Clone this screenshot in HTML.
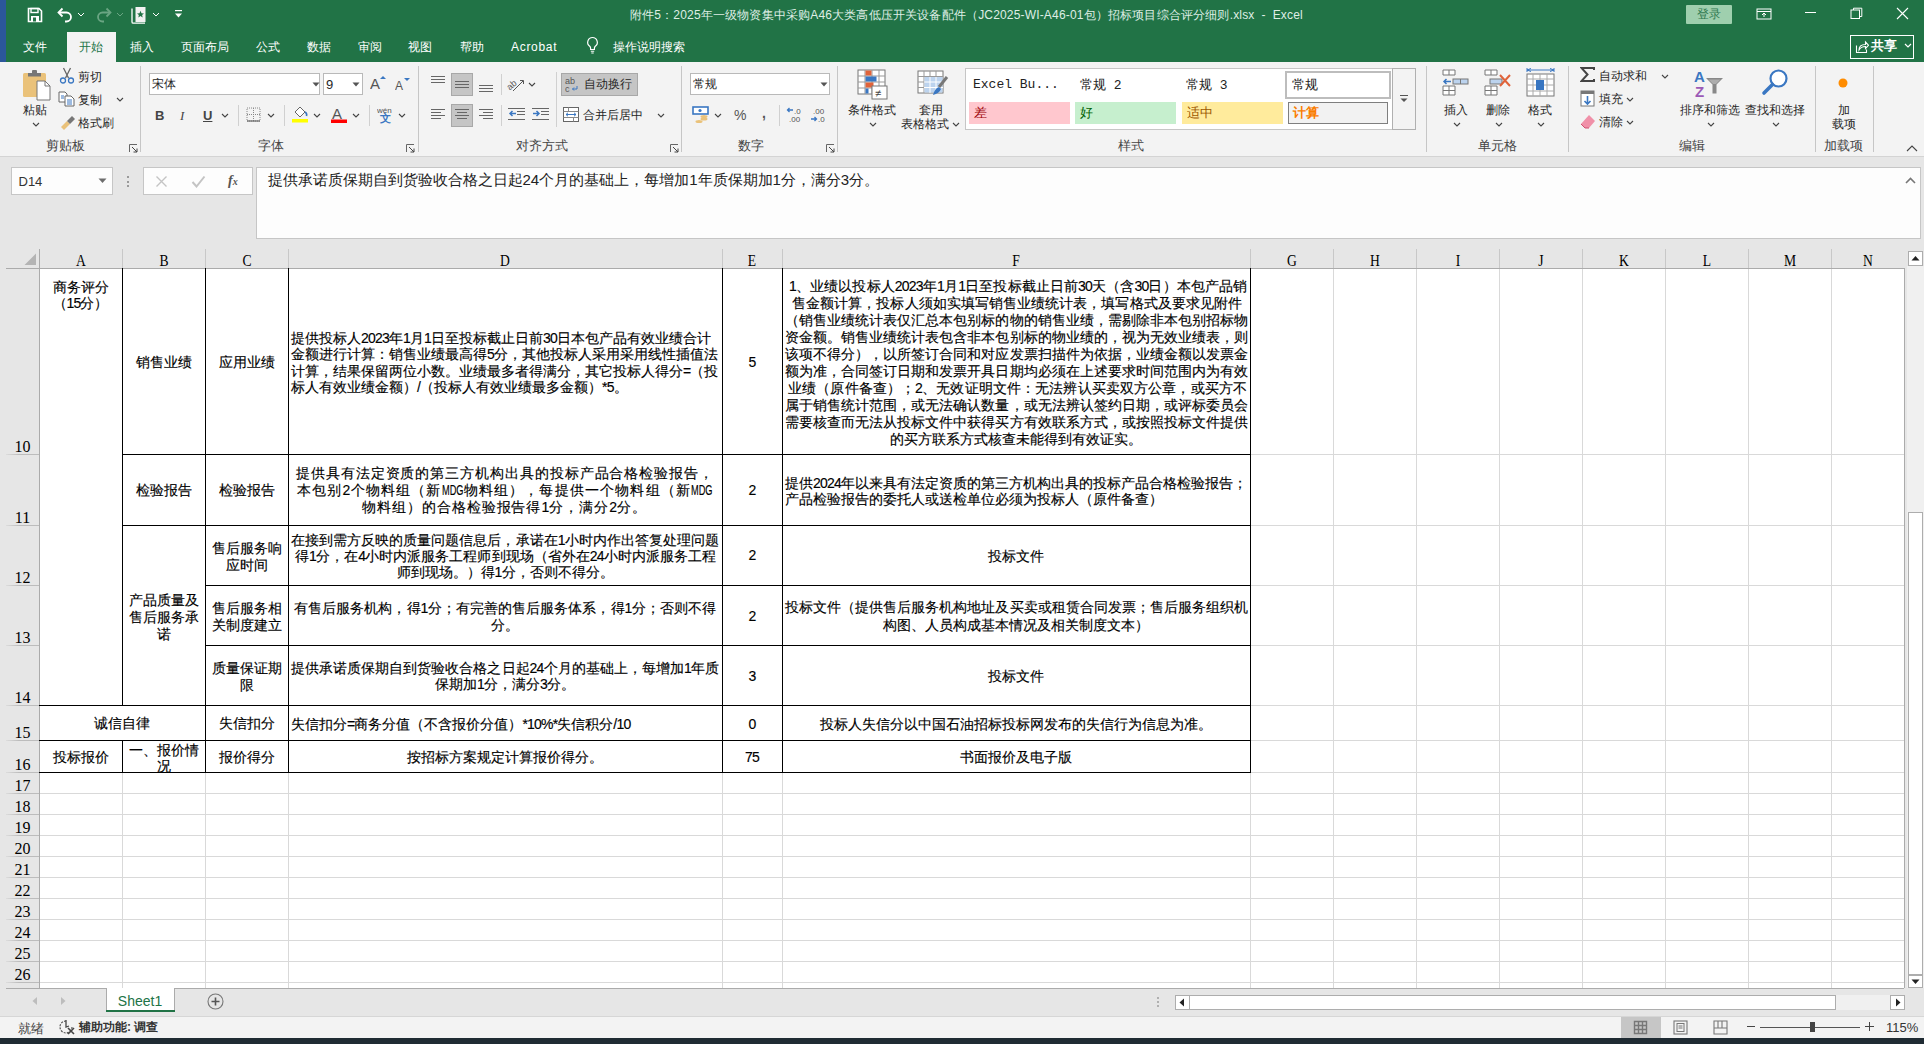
<!DOCTYPE html><html><head><meta charset="utf-8"><style>
html,body{margin:0;padding:0}
body{width:1924px;height:1044px;overflow:hidden;position:relative;background:#fff;font-family:"Liberation Sans",sans-serif}
body div{position:absolute;box-sizing:border-box}
.c{font-size:14px;color:#000;white-space:nowrap;font-family:"Liberation Sans",sans-serif;-webkit-text-stroke:0.15px #000}
.a{letter-spacing:-0.8px}
.L{display:inline-block;height:17px;vertical-align:top}
.L>span{display:inline-block;transform:scaleX(.66);transform-origin:0 50%}
</style></head><body>
<div style="left:0px;top:0px;width:1924px;height:62px;background:#217346"></div>
<div style="left:0px;top:0px;width:6px;height:62px;background:#2b579a"></div>
<div style="left:0px;top:62px;width:1924px;height:94px;background:#f3f3f3"></div>
<div style="left:0px;top:156px;width:1924px;height:1px;background:#d4d4d4"></div>
<div style="left:0px;top:157px;width:1924px;height:831px;background:#e6e6e6"></div>
<svg style="position:absolute;left:27px;top:7px;" width="16" height="16" viewBox="0 0 16 16"><path d="M1.5 1.5h10.5l2.5 2.5v10.5h-13z" fill="none" stroke="#fff" stroke-width="1.6"/><rect x="4" y="1.5" width="7" height="4" fill="none" stroke="#fff" stroke-width="1.4"/><rect x="4" y="9" width="8" height="5.5" fill="#fff"/><rect x="6" y="10.5" width="3" height="4" fill="#217346"/></svg>
<svg style="position:absolute;left:56px;top:7px;" width="18" height="16" viewBox="0 0 18 16"><path d="M3 5.5h7.5a4.5 4.5 0 0 1 0 9h-1.5" fill="none" stroke="#fff" stroke-width="1.8"/><path d="M6.5 1.5L2.5 5.5l4 4" fill="none" stroke="#fff" stroke-width="1.8"/></svg>
<svg style="position:absolute;left:77px;top:12px;" width="8" height="5" viewBox="0 0 8 5"><path d="M1 1l3 3 3-3" fill="none" stroke="#fff" stroke-width="1"/></svg>
<svg style="position:absolute;left:95px;top:7px;" width="18" height="16" viewBox="0 0 18 16"><path d="M15 5.5h-7.5a4.5 4.5 0 0 0 0 9h1.5" fill="none" stroke="#6aa583" stroke-width="1.8"/><path d="M11.5 1.5l4 4-4 4" fill="none" stroke="#6aa583" stroke-width="1.8"/></svg>
<svg style="position:absolute;left:116px;top:12px;" width="8" height="5" viewBox="0 0 8 5"><path d="M1 1l3 3 3-3" fill="none" stroke="#6aa583" stroke-width="1"/></svg>
<svg style="position:absolute;left:130px;top:6px;" width="17" height="18" viewBox="0 0 17 18"><path d="M2 2.5v13.5c0 .8.5 1.2 1.2 1.2H15" fill="none" stroke="#fff" stroke-width="1.3"/><rect x="5.5" y="1" width="10" height="15" fill="#f2f2f2"/><path d="M10.5 4.8l1 2.4 2.5.2-1.9 1.6.6 2.5-2.2-1.4-2.2 1.4.6-2.5-1.9-1.6 2.5-.2z" fill="#217346"/></svg>
<svg style="position:absolute;left:152px;top:12px;" width="8" height="5" viewBox="0 0 8 5"><path d="M1 1l3 3 3-3" fill="none" stroke="#fff" stroke-width="1"/></svg>
<svg style="position:absolute;left:174px;top:9px;" width="9" height="10" viewBox="0 0 9 10"><rect x="1" y="1" width="7" height="1.2" fill="#fff"/><path d="M1 4.5h7l-3.5 4z" fill="#fff"/></svg>
<div style="left:630px;top:6.7px;line-height:17px;font-size:12px;color:#dfeee5;white-space:nowrap;font-family:'Liberation Sans',sans-serif;letter-spacing:0.17px;">附件5：2025年一级物资集中采购A46大类高低压开关设备配件（JC2025-WI-A46-01包）招标项目综合评分细则.xlsx&nbsp; -&nbsp; Excel</div>
<div style="left:1686px;top:5px;width:46px;height:19px;background:#9fcfae;border-radius:1px"></div>
<div style="left:1509.0px;top:6.0px;width:400px;text-align:center;line-height:17px;font-size:12px;color:#2f7a50;white-space:nowrap;">登录</div>
<svg style="position:absolute;left:1756px;top:8px;" width="16" height="12" viewBox="0 0 16 12"><rect x="1" y="1" width="14" height="10" fill="none" stroke="#fff" stroke-width="1"/><path d="M1 3.5h14" stroke="#fff" stroke-width="1"/><path d="M8 9V5M6 7l2-2 2 2" fill="none" stroke="#fff" stroke-width="1"/></svg>
<div style="left:1805px;top:12px;width:11px;height:1px;background:#fff"></div>
<svg style="position:absolute;left:1850px;top:7px;" width="13" height="13" viewBox="0 0 13 13"><rect x="1" y="3" width="8.5" height="8.5" fill="none" stroke="#fff" stroke-width="1"/><path d="M3.5 3V1.2h8.3v8.3H9.5" fill="none" stroke="#fff" stroke-width="1"/></svg>
<svg style="position:absolute;left:1896px;top:7px;" width="13" height="13" viewBox="0 0 13 13"><path d="M1 1l11 11M12 1L1 12" stroke="#fff" stroke-width="1.1"/></svg>
<div style="left:23px;top:38.5px;line-height:17px;font-size:12px;color:#fff;white-space:nowrap;font-family:'Liberation Sans',sans-serif;">文件</div>
<div style="left:129.5px;top:38.5px;line-height:17px;font-size:12px;color:#fff;white-space:nowrap;font-family:'Liberation Sans',sans-serif;">插入</div>
<div style="left:180.5px;top:38.5px;line-height:17px;font-size:12px;color:#fff;white-space:nowrap;font-family:'Liberation Sans',sans-serif;">页面布局</div>
<div style="left:256px;top:38.5px;line-height:17px;font-size:12px;color:#fff;white-space:nowrap;font-family:'Liberation Sans',sans-serif;">公式</div>
<div style="left:306.5px;top:38.5px;line-height:17px;font-size:12px;color:#fff;white-space:nowrap;font-family:'Liberation Sans',sans-serif;">数据</div>
<div style="left:358px;top:38.5px;line-height:17px;font-size:12px;color:#fff;white-space:nowrap;font-family:'Liberation Sans',sans-serif;">审阅</div>
<div style="left:408px;top:38.5px;line-height:17px;font-size:12px;color:#fff;white-space:nowrap;font-family:'Liberation Sans',sans-serif;">视图</div>
<div style="left:459.5px;top:38.5px;line-height:17px;font-size:12px;color:#fff;white-space:nowrap;font-family:'Liberation Sans',sans-serif;">帮助</div>
<div style="left:511px;top:38.5px;line-height:17px;font-size:12px;color:#fff;white-space:nowrap;font-family:'Liberation Sans',sans-serif;letter-spacing:0.7px;">Acrobat</div>
<div style="left:613px;top:38.5px;line-height:17px;font-size:12px;color:#fff;white-space:nowrap;font-family:'Liberation Sans',sans-serif;">操作说明搜索</div>
<div style="left:67px;top:32px;width:49px;height:30px;background:#f3f3f3"></div>
<div style="left:78.5px;top:38.5px;line-height:17px;font-size:12px;color:#217346;white-space:nowrap;">开始</div>
<svg style="position:absolute;left:586px;top:36px;" width="13" height="18" viewBox="0 0 13 18"><path d="M6.5 1.5a4.8 4.8 0 0 0-2.8 8.7c.6.5.9 1.2.9 2v1.3h3.8v-1.3c0-.8.3-1.5.9-2a4.8 4.8 0 0 0-2.8-8.7z" fill="none" stroke="#fff" stroke-width="1.2"/><path d="M4.8 15.2h3.4M5.3 17h2.4" stroke="#fff" stroke-width="1.1"/></svg>
<div style="left:1850px;top:35px;width:64px;height:24px;border:1px solid #fff"></div>
<svg style="position:absolute;left:1855px;top:39px;" width="14" height="15" viewBox="0 0 14 15"><path d="M1.5 6.5v7h10v-3" fill="none" stroke="#fff" stroke-width="1.1"/><path d="M4 11c0-4 3-5.5 6.5-5.5V3l3 3.3-3 3.2V7.5c-2.5 0-5 .8-6.5 3.5z" fill="none" stroke="#fff" stroke-width="1.1"/></svg>
<div style="left:1871px;top:37.0px;line-height:17px;font-size:13px;color:#fff;white-space:nowrap;font-weight:bold;">共享</div>
<svg style="position:absolute;left:1904px;top:43px;" width="8" height="5" viewBox="0 0 8 5"><path d="M1 1l3 3 3-3" fill="none" stroke="#fff" stroke-width="1.2"/></svg>
<div style="left:140px;top:66px;width:1px;height:86px;background:#c6c6c6"></div>
<div style="left:418px;top:66px;width:1px;height:86px;background:#c6c6c6"></div>
<div style="left:681px;top:66px;width:1px;height:86px;background:#c6c6c6"></div>
<div style="left:837px;top:66px;width:1px;height:86px;background:#c6c6c6"></div>
<div style="left:1426px;top:66px;width:1px;height:86px;background:#c6c6c6"></div>
<div style="left:1568px;top:66px;width:1px;height:86px;background:#c6c6c6"></div>
<div style="left:1815px;top:66px;width:1px;height:86px;background:#c6c6c6"></div>
<div style="left:1873px;top:66px;width:1px;height:86px;background:#c6c6c6"></div>
<div style="left:-135.0px;top:138.0px;width:400px;text-align:center;line-height:17px;font-size:12.5px;color:#444;white-space:nowrap;">剪贴板</div>
<div style="left:71.0px;top:138.0px;width:400px;text-align:center;line-height:17px;font-size:12.5px;color:#444;white-space:nowrap;">字体</div>
<div style="left:342.0px;top:138.0px;width:400px;text-align:center;line-height:17px;font-size:12.5px;color:#444;white-space:nowrap;">对齐方式</div>
<div style="left:551.0px;top:138.0px;width:400px;text-align:center;line-height:17px;font-size:12.5px;color:#444;white-space:nowrap;">数字</div>
<div style="left:931.0px;top:138.0px;width:400px;text-align:center;line-height:17px;font-size:12.5px;color:#444;white-space:nowrap;">样式</div>
<div style="left:1297.0px;top:138.0px;width:400px;text-align:center;line-height:17px;font-size:12.5px;color:#444;white-space:nowrap;">单元格</div>
<div style="left:1492.0px;top:138.0px;width:400px;text-align:center;line-height:17px;font-size:12.5px;color:#444;white-space:nowrap;">编辑</div>
<div style="left:1643.5px;top:138.0px;width:400px;text-align:center;line-height:17px;font-size:12.5px;color:#444;white-space:nowrap;">加载项</div>
<svg style="position:absolute;left:129px;top:144px;" width="9" height="9" viewBox="0 0 9 9"><path d="M0.5 8V0.5H8" fill="none" stroke="#666" stroke-width="1"/><path d="M3 3l5 5M8 4.5V8H4.5" fill="none" stroke="#444" stroke-width="1"/></svg>
<svg style="position:absolute;left:406px;top:144px;" width="9" height="9" viewBox="0 0 9 9"><path d="M0.5 8V0.5H8" fill="none" stroke="#666" stroke-width="1"/><path d="M3 3l5 5M8 4.5V8H4.5" fill="none" stroke="#444" stroke-width="1"/></svg>
<svg style="position:absolute;left:670px;top:144px;" width="9" height="9" viewBox="0 0 9 9"><path d="M0.5 8V0.5H8" fill="none" stroke="#666" stroke-width="1"/><path d="M3 3l5 5M8 4.5V8H4.5" fill="none" stroke="#444" stroke-width="1"/></svg>
<svg style="position:absolute;left:826px;top:144px;" width="9" height="9" viewBox="0 0 9 9"><path d="M0.5 8V0.5H8" fill="none" stroke="#666" stroke-width="1"/><path d="M3 3l5 5M8 4.5V8H4.5" fill="none" stroke="#444" stroke-width="1"/></svg>
<svg style="position:absolute;left:1906px;top:145px;" width="12" height="7" viewBox="0 0 12 7"><path d="M1 6l5-5 5 5" fill="none" stroke="#444" stroke-width="1.1"/></svg>
<svg style="position:absolute;left:22px;top:69px;" width="30" height="32" viewBox="0 0 30 32"><rect x="1" y="4" width="23" height="24" rx="1.5" fill="#eac27a"/><path d="M6 4h13v3.5H6z" fill="#777"/><rect x="10" y="1" width="5" height="4" rx="1" fill="#777"/><path d="M15 12h8l5 5v14H15z" fill="#fff" stroke="#777" stroke-width="1"/><path d="M23 12v5h5" fill="none" stroke="#777" stroke-width="1"/></svg>
<div style="left:-165.0px;top:102.0px;width:400px;text-align:center;line-height:17px;font-size:12px;color:#262626;white-space:nowrap;">粘贴</div>
<svg style="position:absolute;left:32px;top:122px;" width="8" height="5" viewBox="0 0 8 5"><path d="M1 1l3 3 3-3" fill="none" stroke="#444" stroke-width="1.1"/></svg>
<svg style="position:absolute;left:59px;top:67px;" width="16" height="17" viewBox="0 0 16 17"><path d="M4.5 1l5 10M11.5 1l-5 10" stroke="#666" stroke-width="1.3"/><circle cx="4" cy="13.5" r="2.5" fill="none" stroke="#3a77c2" stroke-width="1.3"/><circle cx="12" cy="13.5" r="2.5" fill="none" stroke="#3a77c2" stroke-width="1.3"/></svg>
<div style="left:78px;top:68.5px;line-height:17px;font-size:12px;color:#262626;white-space:nowrap;">剪切</div>
<svg style="position:absolute;left:58px;top:91px;" width="17" height="16" viewBox="0 0 17 16"><path d="M1 1h6l2 2v8H1z" fill="#fff" stroke="#666" stroke-width="1"/><path d="M7 5h6l3 3v7H7z" fill="#fff" stroke="#666" stroke-width="1"/><path d="M9 9h5M9 11h5M9 13h5M3 5h3M3 7h3" stroke="#3a77c2" stroke-width="1"/></svg>
<div style="left:78px;top:91.5px;line-height:17px;font-size:12px;color:#262626;white-space:nowrap;">复制</div>
<svg style="position:absolute;left:116px;top:97px;" width="8" height="5" viewBox="0 0 8 5"><path d="M1 1l3 3 3-3" fill="none" stroke="#444" stroke-width="1.1"/></svg>
<svg style="position:absolute;left:59px;top:114px;" width="17" height="16" viewBox="0 0 17 16"><path d="M2 13l6-6 3 3-6 6z" fill="#eac27a"/><path d="M8 7l5-5 3 3-5 5z" fill="#777"/></svg>
<div style="left:78px;top:114.5px;line-height:17px;font-size:12px;color:#262626;white-space:nowrap;">格式刷</div>
<div style="left:149px;top:73px;width:171px;height:22px;background:#fff;border:1px solid #b9b9b9;box-sizing:border-box"></div>
<div style="left:152px;top:75.5px;line-height:17px;font-size:12px;color:#262626;white-space:nowrap;">宋体</div>
<svg style="position:absolute;left:312px;top:82px;" width="8" height="5" viewBox="0 0 8 5"><path d="M0.5 0.5h7l-3.5 4z" fill="#555"/></svg>
<div style="left:323px;top:73px;width:40px;height:22px;background:#fff;border:1px solid #b9b9b9;box-sizing:border-box"></div>
<div style="left:326px;top:75.5px;line-height:17px;font-size:13px;color:#262626;white-space:nowrap;font-family:'Liberation Sans',sans-serif;">9</div>
<svg style="position:absolute;left:352px;top:82px;" width="8" height="5" viewBox="0 0 8 5"><path d="M0.5 0.5h7l-3.5 4z" fill="#555"/></svg>
<svg style="position:absolute;left:370px;top:75px;" width="16" height="15" viewBox="0 0 16 15"><text x="0" y="14" font-family="Liberation Sans" font-size="15" fill="#555">A</text><path d="M10 4l3-3 3 3z" fill="#3a77c2"/></svg>
<svg style="position:absolute;left:395px;top:77px;" width="15" height="13" viewBox="0 0 15 13"><text x="0" y="12.5" font-family="Liberation Sans" font-size="12" fill="#555">A</text><path d="M9 1h6l-3 3z" fill="#3a77c2"/></svg>
<div style="left:155px;top:106.5px;line-height:17px;font-size:13px;color:#444;white-space:nowrap;font-family:'Liberation Sans',sans-serif;font-weight:bold;">B</div>
<div style="left:180px;top:106.5px;line-height:17px;font-size:13px;color:#444;white-space:nowrap;font-family:'Liberation Serif',serif;font-style:italic;">I</div>
<div style="left:203px;top:106.5px;line-height:17px;font-size:13px;color:#444;white-space:nowrap;font-family:'Liberation Sans',sans-serif;font-weight:bold;text-decoration:underline;">U</div>
<svg style="position:absolute;left:221px;top:113px;" width="8" height="5" viewBox="0 0 8 5"><path d="M1 1l3 3 3-3" fill="none" stroke="#444" stroke-width="1.1"/></svg>
<div style="left:238px;top:105px;width:1px;height:21px;background:#d0d0d0"></div>
<svg style="position:absolute;left:246px;top:107px;" width="15" height="15" viewBox="0 0 15 15"><path d="M1 1h13v13H1zM7.5 1v13M1 7.5h13" fill="none" stroke="#888" stroke-width="1" stroke-dasharray="1 1"/><path d="M1 14h13" stroke="#666" stroke-width="1.2"/></svg>
<svg style="position:absolute;left:267px;top:113px;" width="8" height="5" viewBox="0 0 8 5"><path d="M1 1l3 3 3-3" fill="none" stroke="#444" stroke-width="1.1"/></svg>
<div style="left:284px;top:105px;width:1px;height:21px;background:#d0d0d0"></div>
<svg style="position:absolute;left:291px;top:106px;" width="18" height="17" viewBox="0 0 18 17"><path d="M4 6l5-5 5 5-5 5z" fill="#fff" stroke="#666" stroke-width="1"/><path d="M14 6c1.5 1 2 2.5 1.5 4" fill="none" stroke="#3a77c2" stroke-width="1.6"/><rect x="1" y="13" width="16" height="3.5" fill="#ffff00"/></svg>
<svg style="position:absolute;left:313px;top:113px;" width="8" height="5" viewBox="0 0 8 5"><path d="M1 1l3 3 3-3" fill="none" stroke="#444" stroke-width="1.1"/></svg>
<svg style="position:absolute;left:330px;top:106px;" width="18" height="18" viewBox="0 0 18 18"><text x="2" y="13" font-family="Liberation Sans" font-size="15" fill="#555">A</text><rect x="1" y="13.5" width="16" height="3.5" fill="#ff0000"/></svg>
<svg style="position:absolute;left:352px;top:113px;" width="8" height="5" viewBox="0 0 8 5"><path d="M1 1l3 3 3-3" fill="none" stroke="#444" stroke-width="1.1"/></svg>
<div style="left:369px;top:105px;width:1px;height:21px;background:#d0d0d0"></div>
<svg style="position:absolute;left:377px;top:106px;" width="18" height="18" viewBox="0 0 18 18"><text x="0" y="7" font-family="Liberation Sans" font-size="8" fill="#555">wén</text></svg>
<div style="left:380px;top:110.0px;line-height:17px;font-size:11px;color:#3a77c2;white-space:nowrap;font-weight:bold;">文</div>
<svg style="position:absolute;left:398px;top:113px;" width="8" height="5" viewBox="0 0 8 5"><path d="M1 1l3 3 3-3" fill="none" stroke="#444" stroke-width="1.1"/></svg>
<svg style="position:absolute;left:430px;top:75px;" width="16" height="10" viewBox="0 0 16 10"><rect x="1" y="1" width="14" height="1" fill="#666"/><rect x="1" y="4" width="14" height="1" fill="#666"/><rect x="1" y="7" width="14" height="1" fill="#666"/></svg>
<div style="left:451px;top:73px;width:22px;height:23px;background:#c5c5c5;border:1px solid #a8a8a8;box-sizing:border-box"></div>
<svg style="position:absolute;left:454px;top:80px;" width="16" height="10" viewBox="0 0 16 10"><rect x="1" y="1" width="14" height="1" fill="#666"/><rect x="1" y="4" width="14" height="1" fill="#666"/><rect x="1" y="7" width="14" height="1" fill="#666"/></svg>
<svg style="position:absolute;left:478px;top:84px;" width="16" height="10" viewBox="0 0 16 10"><rect x="1" y="1" width="14" height="1" fill="#666"/><rect x="1" y="4" width="14" height="1" fill="#666"/><rect x="1" y="7" width="14" height="1" fill="#666"/></svg>
<div style="left:501px;top:74px;width:1px;height:21px;background:#d0d0d0"></div>
<svg style="position:absolute;left:507px;top:75px;" width="20" height="18" viewBox="0 0 20 18"><text x="0" y="12" font-family="Liberation Sans" font-size="9" fill="#555" transform="rotate(-40 6 10)">ab</text><path d="M6 16l10-10M13 5.5h3.5V9" fill="none" stroke="#555" stroke-width="1"/></svg>
<svg style="position:absolute;left:528px;top:82px;" width="8" height="5" viewBox="0 0 8 5"><path d="M1 1l3 3 3-3" fill="none" stroke="#444" stroke-width="1.1"/></svg>
<svg style="position:absolute;left:430px;top:108px;" width="16" height="14" viewBox="0 0 16 14"><rect x="1" y="1" width="14" height="1" fill="#666"/><rect x="1" y="4" width="10" height="1" fill="#666"/><rect x="1" y="7" width="14" height="1" fill="#666"/><rect x="1" y="10" width="10" height="1" fill="#666"/></svg>
<div style="left:451px;top:104px;width:22px;height:23px;background:#c5c5c5;border:1px solid #a8a8a8;box-sizing:border-box"></div>
<svg style="position:absolute;left:454px;top:108px;" width="16" height="14" viewBox="0 0 16 14"><rect x="1.0" y="1" width="14" height="1" fill="#666"/><rect x="3.0" y="4" width="10" height="1" fill="#666"/><rect x="1.0" y="7" width="14" height="1" fill="#666"/><rect x="3.0" y="10" width="10" height="1" fill="#666"/></svg>
<svg style="position:absolute;left:478px;top:108px;" width="16" height="14" viewBox="0 0 16 14"><rect x="1" y="1" width="14" height="1" fill="#666"/><rect x="5" y="4" width="10" height="1" fill="#666"/><rect x="1" y="7" width="14" height="1" fill="#666"/><rect x="5" y="10" width="10" height="1" fill="#666"/></svg>
<div style="left:501px;top:105px;width:1px;height:21px;background:#d0d0d0"></div>
<svg style="position:absolute;left:508px;top:107px;" width="18" height="14" viewBox="0 0 18 14"><rect x="0" y="1" width="17" height="1" fill="#666"/><rect x="9" y="4" width="8" height="1" fill="#666"/><rect x="9" y="7" width="8" height="1" fill="#666"/><rect x="0" y="12" width="17" height="1" fill="#666"/><path d="M8 6.5H2M4.5 4L2 6.5 4.5 9" fill="none" stroke="#3a77c2" stroke-width="1.5"/></svg>
<svg style="position:absolute;left:532px;top:107px;" width="18" height="14" viewBox="0 0 18 14"><rect x="0" y="1" width="17" height="1" fill="#666"/><rect x="9" y="4" width="8" height="1" fill="#666"/><rect x="9" y="7" width="8" height="1" fill="#666"/><rect x="0" y="12" width="17" height="1" fill="#666"/><path d="M1 6.5h6M4.5 4L7 6.5 4.5 9" fill="none" stroke="#3a77c2" stroke-width="1.5"/></svg>
<div style="left:556px;top:72px;width:1px;height:55px;background:#d0d0d0"></div>
<div style="left:561px;top:73px;width:77px;height:23px;background:#c5c5c5;border:1px solid #a8a8a8;box-sizing:border-box"></div>
<svg style="position:absolute;left:565px;top:76px;" width="16" height="17" viewBox="0 0 16 17"><text x="0" y="8" font-family="Liberation Sans" font-size="9" fill="#555">ab</text><text x="0" y="16" font-family="Liberation Sans" font-size="9" fill="#555">c</text><path d="M12 10v3H7.5M9 11.5L7.5 13 9 14.5" fill="none" stroke="#3a77c2" stroke-width="1"/></svg>
<div style="left:584px;top:76.0px;line-height:17px;font-size:12px;color:#262626;white-space:nowrap;">自动换行</div>
<svg style="position:absolute;left:563px;top:107px;" width="17" height="16" viewBox="0 0 17 16"><rect x="0.5" y="0.5" width="15" height="14" fill="#fff" stroke="#666" stroke-width="1"/><path d="M0.5 4.5h15M0.5 10.5h15M5.5 0.5v4M10.5 10.5v4" stroke="#888" stroke-width="1"/><path d="M3 7.5h10M5 5.8L3 7.5 5 9.2M11 5.8l2 1.7-2 1.7" fill="none" stroke="#3a77c2" stroke-width="1"/></svg>
<div style="left:583px;top:106.5px;line-height:17px;font-size:12px;color:#262626;white-space:nowrap;">合并后居中</div>
<svg style="position:absolute;left:657px;top:113px;" width="8" height="5" viewBox="0 0 8 5"><path d="M1 1l3 3 3-3" fill="none" stroke="#444" stroke-width="1.1"/></svg>
<div style="left:690px;top:73px;width:140px;height:22px;background:#fff;border:1px solid #b9b9b9;box-sizing:border-box"></div>
<div style="left:693px;top:75.5px;line-height:17px;font-size:12px;color:#262626;white-space:nowrap;">常规</div>
<svg style="position:absolute;left:820px;top:82px;" width="8" height="5" viewBox="0 0 8 5"><path d="M0.5 0.5h7l-3.5 4z" fill="#555"/></svg>
<svg style="position:absolute;left:692px;top:106px;" width="18" height="18" viewBox="0 0 18 18"><rect x="1" y="1" width="15" height="7" fill="#fff" stroke="#3a77c2" stroke-width="1.6"/><circle cx="8" cy="4.5" r="1.6" fill="#3a77c2"/><ellipse cx="12" cy="10.5" rx="3.5" ry="1.5" fill="#eac27a"/><ellipse cx="12" cy="13" rx="3.5" ry="1.5" fill="#eac27a"/><ellipse cx="7" cy="15.5" rx="3.5" ry="1.5" fill="#eac27a"/></svg>
<svg style="position:absolute;left:714px;top:113px;" width="8" height="5" viewBox="0 0 8 5"><path d="M1 1l3 3 3-3" fill="none" stroke="#444" stroke-width="1.1"/></svg>
<div style="left:734px;top:107.0px;line-height:17px;font-size:14px;color:#555;white-space:nowrap;font-family:'Liberation Sans',sans-serif;">%</div>
<div style="left:762px;top:104.5px;line-height:17px;font-size:14px;color:#555;white-space:nowrap;font-family:'Liberation Sans',sans-serif;font-weight:bold;">,</div>
<div style="left:779px;top:105px;width:1px;height:21px;background:#d0d0d0"></div>
<svg style="position:absolute;left:786px;top:106px;" width="16" height="17" viewBox="0 0 16 17"><path d="M7 4H1.5M3.5 2L1.5 4l2 2" fill="none" stroke="#3a77c2" stroke-width="1.3"/><text x="8" y="8" font-family="Liberation Sans" font-size="8" fill="#555">.0</text><text x="3" y="16" font-family="Liberation Sans" font-size="8" fill="#555">.00</text></svg>
<svg style="position:absolute;left:810px;top:106px;" width="16" height="17" viewBox="0 0 16 17"><text x="3" y="8" font-family="Liberation Sans" font-size="8" fill="#555">.00</text><path d="M1 13h5.5M4.5 11l2 2-2 2" fill="none" stroke="#3a77c2" stroke-width="1.3"/><text x="8" y="16" font-family="Liberation Sans" font-size="8" fill="#555">.0</text></svg>
<svg style="position:absolute;left:857px;top:69px;" width="32" height="32" viewBox="0 0 32 32"><rect x="1" y="1" width="27" height="24" fill="#fff" stroke="#777" stroke-width="1"/><path d="M1 7h27M1 13h27M1 19h27M8 1v24M15 1v24M22 1v24" stroke="#999" stroke-width="1"/><rect x="8.5" y="1.5" width="6" height="5" fill="#e0633a"/><rect x="8.5" y="7.5" width="11" height="5" fill="#3a77c2"/><rect x="8.5" y="13.5" width="8" height="5" fill="#e0633a"/><rect x="8.5" y="19.5" width="3" height="5" fill="#3a77c2"/><rect x="15" y="17" width="15" height="13" fill="#fff" stroke="#777" stroke-width="1"/><text x="18" y="28" font-family="Liberation Sans" font-size="11" fill="#444">≠</text></svg>
<div style="left:672.0px;top:101.5px;width:400px;text-align:center;line-height:17px;font-size:12px;color:#262626;white-space:nowrap;">条件格式</div>
<svg style="position:absolute;left:869px;top:122px;" width="8" height="5" viewBox="0 0 8 5"><path d="M1 1l3 3 3-3" fill="none" stroke="#444" stroke-width="1.1"/></svg>
<svg style="position:absolute;left:917px;top:70px;" width="32" height="32" viewBox="0 0 32 32"><rect x="1" y="1" width="25" height="22" fill="#fff" stroke="#777" stroke-width="1"/><path d="M1 6.5h25M1 12h25M1 17.5h25M7 1v22M13 1v22M19 1v22" stroke="#999" stroke-width="1"/><rect x="7.5" y="7" width="18" height="15.5" fill="#bcd3ee"/><path d="M7 12h19M7 17.5h19M13 7v16M19 7v16" stroke="#fff" stroke-width="1"/><path d="M30 7l-8 10" stroke="#777" stroke-width="3"/><path d="M22 17c-3 1-5 4-6 8 4-1 7-3 8-6z" fill="#3a77c2"/></svg>
<div style="left:731.0px;top:101.5px;width:400px;text-align:center;line-height:17px;font-size:12px;color:#262626;white-space:nowrap;">套用</div>
<div style="left:725.0px;top:116.0px;width:400px;text-align:center;line-height:17px;font-size:12px;color:#262626;white-space:nowrap;">表格格式</div>
<svg style="position:absolute;left:952px;top:122px;" width="8" height="5" viewBox="0 0 8 5"><path d="M1 1l3 3 3-3" fill="none" stroke="#444" stroke-width="1.1"/></svg>
<div style="left:965px;top:68px;width:428px;height:62px;background:#fff;border:1px solid #c6c6c6;box-sizing:border-box"></div>
<div style="left:973px;top:76.0px;line-height:17px;font-size:13px;color:#222;white-space:nowrap;font-family:'Liberation Mono',monospace;">Excel Bu...</div>
<div style="left:1080px;top:75.5px;line-height:17px;font-size:13px;color:#222;white-space:nowrap;">常规<span style="font-family:Liberation Mono">&nbsp;2</span></div>
<div style="left:1186px;top:75.5px;line-height:17px;font-size:13px;color:#222;white-space:nowrap;">常规<span style="font-family:Liberation Mono">&nbsp;3</span></div>
<div style="left:1285px;top:71px;width:106px;height:28px;background:#fff;border:2px solid #bdbdbd;box-sizing:border-box"></div>
<div style="left:1292px;top:75.5px;line-height:17px;font-size:13px;color:#222;white-space:nowrap;">常规</div>
<div style="left:969px;top:102px;width:101px;height:22px;background:#ffc7ce"></div>
<div style="left:974px;top:104.0px;line-height:17px;font-size:13px;color:#9c0006;white-space:nowrap;">差</div>
<div style="left:1075px;top:102px;width:101px;height:22px;background:#c6efce"></div>
<div style="left:1080px;top:104.0px;line-height:17px;font-size:13px;color:#006100;white-space:nowrap;">好</div>
<div style="left:1182px;top:102px;width:101px;height:22px;background:#ffeb9c"></div>
<div style="left:1187px;top:104.0px;line-height:17px;font-size:13px;color:#9c5700;white-space:nowrap;">适中</div>
<div style="left:1288px;top:102px;width:100px;height:22px;background:#f2f2f2;border:1px solid #7f7f7f;box-sizing:border-box"></div>
<div style="left:1293px;top:104.0px;line-height:17px;font-size:13px;color:#fa7d00;white-space:nowrap;font-weight:bold;">计算</div>
<div style="left:1392px;top:68px;width:24px;height:62px;background:#f3f3f3;border:1px solid #b0b0b0;box-sizing:border-box"></div>
<svg style="position:absolute;left:1399px;top:94px;" width="10" height="9" viewBox="0 0 10 9"><path d="M1 1.5h8" stroke="#555" stroke-width="1"/><path d="M1.5 4.5h7l-3.5 3.5z" fill="#555"/></svg>
<svg style="position:absolute;left:1442px;top:69px;" width="30" height="30" viewBox="0 0 30 30"><path d="M1 1h12v5H1zM7 1v5" fill="#fff" stroke="#777"/><path d="M1 17h12v9H1zM1 21.5h12M7 17v9" fill="#fff" stroke="#777"/><rect x="11" y="10" width="15" height="5" fill="#bcd3ee" stroke="#777"/><path d="M18.5 10v5" stroke="#777"/><path d="M9 12.5H2M4.5 10L2 12.5 4.5 15" fill="none" stroke="#3a77c2" stroke-width="1.5"/></svg>
<div style="left:1256.0px;top:101.5px;width:400px;text-align:center;line-height:17px;font-size:12px;color:#262626;white-space:nowrap;">插入</div>
<svg style="position:absolute;left:1453px;top:122px;" width="8" height="5" viewBox="0 0 8 5"><path d="M1 1l3 3 3-3" fill="none" stroke="#444" stroke-width="1.1"/></svg>
<svg style="position:absolute;left:1484px;top:69px;" width="30" height="30" viewBox="0 0 30 30"><path d="M1 1h12v5H1zM7 1v5" fill="#fff" stroke="#777"/><path d="M1 17h12v9H1zM1 21.5h12M7 17v9" fill="#fff" stroke="#777"/><rect x="6" y="10" width="12" height="5" fill="#bcd3ee" stroke="#777"/><path d="M16 6l10 11M26 6L16 17" stroke="#e0633a" stroke-width="2"/></svg>
<div style="left:1298.0px;top:101.5px;width:400px;text-align:center;line-height:17px;font-size:12px;color:#262626;white-space:nowrap;">删除</div>
<svg style="position:absolute;left:1495px;top:122px;" width="8" height="5" viewBox="0 0 8 5"><path d="M1 1l3 3 3-3" fill="none" stroke="#444" stroke-width="1.1"/></svg>
<svg style="position:absolute;left:1526px;top:68px;" width="30" height="30" viewBox="0 0 30 30"><path d="M1 2h27M1 0v4M28 0v4M5 0.5L1 2l4 1.5M24 0.5L28 2l-4 1.5" fill="none" stroke="#3a77c2" stroke-width="1"/><rect x="1" y="6" width="27" height="22" fill="#fff" stroke="#777"/><path d="M1 11h27M1 17h27M1 23h27M7 6v22M14 6v22M21 6v22" stroke="#aaa"/><rect x="10" y="12" width="8" height="10" fill="#3a77c2"/></svg>
<div style="left:1340.0px;top:101.5px;width:400px;text-align:center;line-height:17px;font-size:12px;color:#262626;white-space:nowrap;">格式</div>
<svg style="position:absolute;left:1537px;top:122px;" width="8" height="5" viewBox="0 0 8 5"><path d="M1 1l3 3 3-3" fill="none" stroke="#444" stroke-width="1.1"/></svg>
<svg style="position:absolute;left:1580px;top:67px;" width="16" height="16" viewBox="0 0 16 16"><path d="M14 3V1H1.5l6 6.5-6 6.5H14v-2" fill="none" stroke="#444" stroke-width="2"/></svg>
<div style="left:1599px;top:68.0px;line-height:17px;font-size:12px;color:#262626;white-space:nowrap;">自动求和</div>
<svg style="position:absolute;left:1661px;top:74px;" width="8" height="5" viewBox="0 0 8 5"><path d="M1 1l3 3 3-3" fill="none" stroke="#444" stroke-width="1.1"/></svg>
<svg style="position:absolute;left:1580px;top:90px;" width="16" height="17" viewBox="0 0 16 17"><rect x="1" y="1" width="13" height="15" fill="#fff" stroke="#777"/><rect x="1" y="1" width="13" height="3" fill="#777"/><path d="M7.5 6v8M4.5 11l3 3 3-3" fill="none" stroke="#3a77c2" stroke-width="1.6"/></svg>
<div style="left:1599px;top:91.0px;line-height:17px;font-size:12px;color:#262626;white-space:nowrap;">填充</div>
<svg style="position:absolute;left:1626px;top:97px;" width="8" height="5" viewBox="0 0 8 5"><path d="M1 1l3 3 3-3" fill="none" stroke="#444" stroke-width="1.1"/></svg>
<svg style="position:absolute;left:1580px;top:114px;" width="16" height="16" viewBox="0 0 16 16"><path d="M9 1l6 6-6 7H5l-4-4z" fill="#f090a8"/><path d="M1 10l4 4h4" fill="none" stroke="#d05070" stroke-width="1"/></svg>
<div style="left:1599px;top:114.0px;line-height:17px;font-size:12px;color:#262626;white-space:nowrap;">清除</div>
<svg style="position:absolute;left:1626px;top:120px;" width="8" height="5" viewBox="0 0 8 5"><path d="M1 1l3 3 3-3" fill="none" stroke="#444" stroke-width="1.1"/></svg>
<svg style="position:absolute;left:1694px;top:68px;" width="32" height="32" viewBox="0 0 32 32"><text x="0" y="14" font-family="Liberation Sans" font-weight="bold" font-size="15" fill="#3a77c2">A</text><text x="1" y="29" font-family="Liberation Sans" font-weight="bold" font-size="15" fill="#9b59b6">Z</text><path d="M12 10h17l-6.5 6.5v9h-4v-9z" fill="#888"/><path d="M14.5 11.5h12l-4.5 4.5h-3z" fill="#f3f3f3" opacity=".35"/></svg>
<div style="left:1510.0px;top:101.5px;width:400px;text-align:center;line-height:17px;font-size:12px;color:#262626;white-space:nowrap;">排序和筛选</div>
<svg style="position:absolute;left:1707px;top:122px;" width="8" height="5" viewBox="0 0 8 5"><path d="M1 1l3 3 3-3" fill="none" stroke="#444" stroke-width="1.1"/></svg>
<svg style="position:absolute;left:1760px;top:68px;" width="30" height="32" viewBox="0 0 30 32"><circle cx="18.5" cy="10.5" r="8" fill="#fff" stroke="#3a77c2" stroke-width="2.2"/><path d="M12.5 16.5L4 25" stroke="#3a77c2" stroke-width="3.6" stroke-linecap="round"/></svg>
<div style="left:1575.0px;top:101.5px;width:400px;text-align:center;line-height:17px;font-size:12px;color:#262626;white-space:nowrap;">查找和选择</div>
<svg style="position:absolute;left:1772px;top:122px;" width="8" height="5" viewBox="0 0 8 5"><path d="M1 1l3 3 3-3" fill="none" stroke="#444" stroke-width="1.1"/></svg>
<svg style="position:absolute;left:1837px;top:77px;" width="12" height="12" viewBox="0 0 12 12"><circle cx="6" cy="6" r="4.5" fill="#ff8c00"/></svg>
<div style="left:1643.5px;top:101.5px;width:400px;text-align:center;line-height:17px;font-size:12px;color:#262626;white-space:nowrap;">加</div>
<div style="left:1643.5px;top:116.0px;width:400px;text-align:center;line-height:17px;font-size:12px;color:#262626;white-space:nowrap;">载项</div>
<div style="left:11px;top:167px;width:102px;height:28px;background:#fdfdfd;border:1px solid #c6c6c6;box-sizing:border-box"></div>
<div style="left:18.5px;top:173.0px;line-height:17px;font-size:13px;color:#333;white-space:nowrap;font-family:'Liberation Sans',sans-serif;">D14</div>
<svg style="position:absolute;left:98px;top:178px;" width="9" height="6" viewBox="0 0 9 6"><path d="M0.5 0.5h8l-4 4.5z" fill="#6d6d6d"/></svg>
<div style="left:127px;top:176px;width:2px;height:2px;background:#9a9a9a"></div>
<div style="left:127px;top:180.5px;width:2px;height:2px;background:#9a9a9a"></div>
<div style="left:127px;top:185px;width:2px;height:2px;background:#9a9a9a"></div>
<div style="left:143px;top:167px;width:110px;height:28px;background:#fdfdfd;border:1px solid #c6c6c6;box-sizing:border-box"></div>
<svg style="position:absolute;left:155px;top:175px;" width="13" height="13" viewBox="0 0 13 13"><path d="M1.5 1.5l10 10M11.5 1.5l-10 10" stroke="#c4c4c4" stroke-width="1.4"/></svg>
<svg style="position:absolute;left:191px;top:175px;" width="15" height="13" viewBox="0 0 15 13"><path d="M1.5 7l4 4.5 8-10" fill="none" stroke="#c4c4c4" stroke-width="2"/></svg>
<div style="left:228px;top:172.0px;line-height:17px;font-size:14px;color:#555;white-space:nowrap;font-family:'Liberation Serif',serif;font-weight:bold;"><i>f</i><span style="font-size:10px"><i>x</i></span></div>
<div style="left:256px;top:167px;width:1665px;height:72px;background:#fdfdfd;border:1px solid #c6c6c6;box-sizing:border-box"></div>
<div style="left:267.5px;top:170.7px;line-height:17px;font-size:15px;color:#222;white-space:nowrap;font-family:'Liberation Sans',sans-serif;">提供承诺质保期自到货验收合格之日起24个月的基础上，每增加1年质保期加1分，满分3分。</div>
<svg style="position:absolute;left:1905px;top:177px;" width="11" height="7" viewBox="0 0 11 7"><path d="M1 6l4.5-4.5L10 6" fill="none" stroke="#777" stroke-width="1.6"/></svg>
<div style="left:6px;top:249px;width:1898px;height:20px;background:#e6e6e6"></div>
<svg style="position:absolute;left:24px;top:253px;" width="13" height="13" viewBox="0 0 13 13"><path d="M12 0.5V12H0.5z" fill="#b4b4b4"/></svg>
<div style="left:50.5px;top:251.3px;width:60px;text-align:center;line-height:19px;font-size:16px;color:#000;white-space:nowrap;font-family:'Liberation Serif',serif;transform:scaleX(.85);">A</div>
<div style="left:133.5px;top:251.3px;width:60px;text-align:center;line-height:19px;font-size:16px;color:#000;white-space:nowrap;font-family:'Liberation Serif',serif;transform:scaleX(.85);">B</div>
<div style="left:216.5px;top:251.3px;width:60px;text-align:center;line-height:19px;font-size:16px;color:#000;white-space:nowrap;font-family:'Liberation Serif',serif;transform:scaleX(.85);">C</div>
<div style="left:475.0px;top:251.3px;width:60px;text-align:center;line-height:19px;font-size:16px;color:#000;white-space:nowrap;font-family:'Liberation Serif',serif;transform:scaleX(.85);">D</div>
<div style="left:722.0px;top:251.3px;width:60px;text-align:center;line-height:19px;font-size:16px;color:#000;white-space:nowrap;font-family:'Liberation Serif',serif;transform:scaleX(.85);">E</div>
<div style="left:986.0px;top:251.3px;width:60px;text-align:center;line-height:19px;font-size:16px;color:#000;white-space:nowrap;font-family:'Liberation Serif',serif;transform:scaleX(.85);">F</div>
<div style="left:1261.5px;top:251.3px;width:60px;text-align:center;line-height:19px;font-size:16px;color:#000;white-space:nowrap;font-family:'Liberation Serif',serif;transform:scaleX(.85);">G</div>
<div style="left:1344.5px;top:251.3px;width:60px;text-align:center;line-height:19px;font-size:16px;color:#000;white-space:nowrap;font-family:'Liberation Serif',serif;transform:scaleX(.85);">H</div>
<div style="left:1427.5px;top:251.3px;width:60px;text-align:center;line-height:19px;font-size:16px;color:#000;white-space:nowrap;font-family:'Liberation Serif',serif;transform:scaleX(.85);">I</div>
<div style="left:1510.5px;top:251.3px;width:60px;text-align:center;line-height:19px;font-size:16px;color:#000;white-space:nowrap;font-family:'Liberation Serif',serif;transform:scaleX(.85);">J</div>
<div style="left:1593.5px;top:251.3px;width:60px;text-align:center;line-height:19px;font-size:16px;color:#000;white-space:nowrap;font-family:'Liberation Serif',serif;transform:scaleX(.85);">K</div>
<div style="left:1676.5px;top:251.3px;width:60px;text-align:center;line-height:19px;font-size:16px;color:#000;white-space:nowrap;font-family:'Liberation Serif',serif;transform:scaleX(.85);">L</div>
<div style="left:1759.5px;top:251.3px;width:60px;text-align:center;line-height:19px;font-size:16px;color:#000;white-space:nowrap;font-family:'Liberation Serif',serif;transform:scaleX(.85);">M</div>
<div style="left:1837.5px;top:251.3px;width:60px;text-align:center;line-height:19px;font-size:16px;color:#000;white-space:nowrap;font-family:'Liberation Serif',serif;transform:scaleX(.85);">N</div>
<div style="left:39px;top:249px;width:1px;height:20px;background:#ababab"></div>
<div style="left:122px;top:249px;width:1px;height:20px;background:#c8c8c8"></div>
<div style="left:205px;top:249px;width:1px;height:20px;background:#c8c8c8"></div>
<div style="left:288px;top:249px;width:1px;height:20px;background:#c8c8c8"></div>
<div style="left:722px;top:249px;width:1px;height:20px;background:#c8c8c8"></div>
<div style="left:782px;top:249px;width:1px;height:20px;background:#c8c8c8"></div>
<div style="left:1250px;top:249px;width:1px;height:20px;background:#c8c8c8"></div>
<div style="left:1333px;top:249px;width:1px;height:20px;background:#c8c8c8"></div>
<div style="left:1416px;top:249px;width:1px;height:20px;background:#c8c8c8"></div>
<div style="left:1499px;top:249px;width:1px;height:20px;background:#c8c8c8"></div>
<div style="left:1582px;top:249px;width:1px;height:20px;background:#c8c8c8"></div>
<div style="left:1665px;top:249px;width:1px;height:20px;background:#c8c8c8"></div>
<div style="left:1748px;top:249px;width:1px;height:20px;background:#c8c8c8"></div>
<div style="left:1831px;top:249px;width:1px;height:20px;background:#c8c8c8"></div>
<div style="left:6px;top:268px;width:1898px;height:1px;background:#ababab"></div>
<div style="left:40px;top:269px;width:1864px;height:719px;background:#fff"></div>
<div style="left:6px;top:454px;width:33px;height:1px;background:linear-gradient(90deg,#dcdcdc,#bcbcbc 40%)"></div>
<div style="left:6px;top:438px;width:33px;height:17px;text-align:center;line-height:17px;font-size:16px;font-family:'Liberation Serif',serif;color:#000">10</div>
<div style="left:6px;top:525px;width:33px;height:1px;background:linear-gradient(90deg,#dcdcdc,#bcbcbc 40%)"></div>
<div style="left:6px;top:509px;width:33px;height:17px;text-align:center;line-height:17px;font-size:16px;font-family:'Liberation Serif',serif;color:#000">11</div>
<div style="left:6px;top:585px;width:33px;height:1px;background:linear-gradient(90deg,#dcdcdc,#bcbcbc 40%)"></div>
<div style="left:6px;top:569px;width:33px;height:17px;text-align:center;line-height:17px;font-size:16px;font-family:'Liberation Serif',serif;color:#000">12</div>
<div style="left:6px;top:645px;width:33px;height:1px;background:linear-gradient(90deg,#dcdcdc,#bcbcbc 40%)"></div>
<div style="left:6px;top:629px;width:33px;height:17px;text-align:center;line-height:17px;font-size:16px;font-family:'Liberation Serif',serif;color:#000">13</div>
<div style="left:6px;top:705px;width:33px;height:1px;background:linear-gradient(90deg,#dcdcdc,#bcbcbc 40%)"></div>
<div style="left:6px;top:689px;width:33px;height:17px;text-align:center;line-height:17px;font-size:16px;font-family:'Liberation Serif',serif;color:#000">14</div>
<div style="left:6px;top:740px;width:33px;height:1px;background:linear-gradient(90deg,#dcdcdc,#bcbcbc 40%)"></div>
<div style="left:6px;top:724px;width:33px;height:17px;text-align:center;line-height:17px;font-size:16px;font-family:'Liberation Serif',serif;color:#000">15</div>
<div style="left:6px;top:772px;width:33px;height:1px;background:linear-gradient(90deg,#dcdcdc,#bcbcbc 40%)"></div>
<div style="left:6px;top:756px;width:33px;height:17px;text-align:center;line-height:17px;font-size:16px;font-family:'Liberation Serif',serif;color:#000">16</div>
<div style="left:6px;top:793px;width:33px;height:1px;background:linear-gradient(90deg,#dcdcdc,#bcbcbc 40%)"></div>
<div style="left:6px;top:777px;width:33px;height:17px;text-align:center;line-height:17px;font-size:16px;font-family:'Liberation Serif',serif;color:#000">17</div>
<div style="left:6px;top:814px;width:33px;height:1px;background:linear-gradient(90deg,#dcdcdc,#bcbcbc 40%)"></div>
<div style="left:6px;top:798px;width:33px;height:17px;text-align:center;line-height:17px;font-size:16px;font-family:'Liberation Serif',serif;color:#000">18</div>
<div style="left:6px;top:835px;width:33px;height:1px;background:linear-gradient(90deg,#dcdcdc,#bcbcbc 40%)"></div>
<div style="left:6px;top:819px;width:33px;height:17px;text-align:center;line-height:17px;font-size:16px;font-family:'Liberation Serif',serif;color:#000">19</div>
<div style="left:6px;top:856px;width:33px;height:1px;background:linear-gradient(90deg,#dcdcdc,#bcbcbc 40%)"></div>
<div style="left:6px;top:840px;width:33px;height:17px;text-align:center;line-height:17px;font-size:16px;font-family:'Liberation Serif',serif;color:#000">20</div>
<div style="left:6px;top:877px;width:33px;height:1px;background:linear-gradient(90deg,#dcdcdc,#bcbcbc 40%)"></div>
<div style="left:6px;top:861px;width:33px;height:17px;text-align:center;line-height:17px;font-size:16px;font-family:'Liberation Serif',serif;color:#000">21</div>
<div style="left:6px;top:898px;width:33px;height:1px;background:linear-gradient(90deg,#dcdcdc,#bcbcbc 40%)"></div>
<div style="left:6px;top:882px;width:33px;height:17px;text-align:center;line-height:17px;font-size:16px;font-family:'Liberation Serif',serif;color:#000">22</div>
<div style="left:6px;top:919px;width:33px;height:1px;background:linear-gradient(90deg,#dcdcdc,#bcbcbc 40%)"></div>
<div style="left:6px;top:903px;width:33px;height:17px;text-align:center;line-height:17px;font-size:16px;font-family:'Liberation Serif',serif;color:#000">23</div>
<div style="left:6px;top:940px;width:33px;height:1px;background:linear-gradient(90deg,#dcdcdc,#bcbcbc 40%)"></div>
<div style="left:6px;top:924px;width:33px;height:17px;text-align:center;line-height:17px;font-size:16px;font-family:'Liberation Serif',serif;color:#000">24</div>
<div style="left:6px;top:961px;width:33px;height:1px;background:linear-gradient(90deg,#dcdcdc,#bcbcbc 40%)"></div>
<div style="left:6px;top:945px;width:33px;height:17px;text-align:center;line-height:17px;font-size:16px;font-family:'Liberation Serif',serif;color:#000">25</div>
<div style="left:6px;top:982px;width:33px;height:1px;background:linear-gradient(90deg,#dcdcdc,#bcbcbc 40%)"></div>
<div style="left:6px;top:966px;width:33px;height:17px;text-align:center;line-height:17px;font-size:16px;font-family:'Liberation Serif',serif;color:#000">26</div>
<div style="left:39px;top:249px;width:1px;height:739px;background:#ababab"></div>
<div style="left:122px;top:269px;width:1px;height:719px;background:#d9d9d9"></div>
<div style="left:205px;top:269px;width:1px;height:719px;background:#d9d9d9"></div>
<div style="left:288px;top:269px;width:1px;height:719px;background:#d9d9d9"></div>
<div style="left:722px;top:269px;width:1px;height:719px;background:#d9d9d9"></div>
<div style="left:782px;top:269px;width:1px;height:719px;background:#d9d9d9"></div>
<div style="left:1250px;top:269px;width:1px;height:719px;background:#d9d9d9"></div>
<div style="left:1333px;top:269px;width:1px;height:719px;background:#d9d9d9"></div>
<div style="left:1416px;top:269px;width:1px;height:719px;background:#d9d9d9"></div>
<div style="left:1499px;top:269px;width:1px;height:719px;background:#d9d9d9"></div>
<div style="left:1582px;top:269px;width:1px;height:719px;background:#d9d9d9"></div>
<div style="left:1665px;top:269px;width:1px;height:719px;background:#d9d9d9"></div>
<div style="left:1748px;top:269px;width:1px;height:719px;background:#d9d9d9"></div>
<div style="left:1831px;top:269px;width:1px;height:719px;background:#d9d9d9"></div>
<div style="left:40px;top:454px;width:1864px;height:1px;background:#d9d9d9"></div>
<div style="left:40px;top:525px;width:1864px;height:1px;background:#d9d9d9"></div>
<div style="left:40px;top:585px;width:1864px;height:1px;background:#d9d9d9"></div>
<div style="left:40px;top:645px;width:1864px;height:1px;background:#d9d9d9"></div>
<div style="left:40px;top:705px;width:1864px;height:1px;background:#d9d9d9"></div>
<div style="left:40px;top:740px;width:1864px;height:1px;background:#d9d9d9"></div>
<div style="left:40px;top:772px;width:1864px;height:1px;background:#d9d9d9"></div>
<div style="left:40px;top:793px;width:1864px;height:1px;background:#d9d9d9"></div>
<div style="left:40px;top:814px;width:1864px;height:1px;background:#d9d9d9"></div>
<div style="left:40px;top:835px;width:1864px;height:1px;background:#d9d9d9"></div>
<div style="left:40px;top:856px;width:1864px;height:1px;background:#d9d9d9"></div>
<div style="left:40px;top:877px;width:1864px;height:1px;background:#d9d9d9"></div>
<div style="left:40px;top:898px;width:1864px;height:1px;background:#d9d9d9"></div>
<div style="left:40px;top:919px;width:1864px;height:1px;background:#d9d9d9"></div>
<div style="left:40px;top:940px;width:1864px;height:1px;background:#d9d9d9"></div>
<div style="left:40px;top:961px;width:1864px;height:1px;background:#d9d9d9"></div>
<div style="left:40px;top:982px;width:1864px;height:1px;background:#d9d9d9"></div>
<div style="left:1904px;top:268px;width:1px;height:720px;background:#ababab"></div>
<div style="left:40px;top:269px;width:82px;height:436px;background:#fff"></div>
<div style="left:123px;top:526px;width:82px;height:179px;background:#fff"></div>
<div style="left:40px;top:706px;width:165px;height:34px;background:#fff"></div>
<div style="left:122px;top:268px;width:1px;height:438px;background:#000"></div>
<div style="left:122px;top:740px;width:1px;height:33px;background:#000"></div>
<div style="left:205px;top:268px;width:1px;height:505px;background:#000"></div>
<div style="left:288px;top:268px;width:1px;height:505px;background:#000"></div>
<div style="left:722px;top:268px;width:1px;height:505px;background:#000"></div>
<div style="left:782px;top:268px;width:1px;height:505px;background:#000"></div>
<div style="left:1250px;top:268px;width:1px;height:505px;background:#000"></div>
<div style="left:122px;top:454px;width:1129px;height:1px;background:#000"></div>
<div style="left:122px;top:525px;width:1129px;height:1px;background:#000"></div>
<div style="left:205px;top:585px;width:1046px;height:1px;background:#000"></div>
<div style="left:205px;top:645px;width:1046px;height:1px;background:#000"></div>
<div style="left:39px;top:705px;width:1212px;height:1px;background:#000"></div>
<div style="left:39px;top:740px;width:1212px;height:1px;background:#000"></div>
<div style="left:39px;top:772px;width:1212px;height:1px;background:#000"></div>
<div class="c" style="left:39px;top:278.5px;width:83px;line-height:17px;text-align:center;">商务评分</div>
<div class="c" style="left:39px;top:295.0px;width:83px;line-height:17px;text-align:center;">（<span class="a">15</span>分）</div>
<div class="c" style="left:122px;top:354.0px;width:83px;line-height:17px;text-align:center;">销售业绩</div>
<div class="c" style="left:205px;top:354.0px;width:83px;line-height:17px;text-align:center;">应用业绩</div>
<div class="c" style="left:291px;top:329.5px;width:431px;line-height:17px;text-align:left;">提供投标人<span class="a">2023</span>年<span class="a">1</span>月<span class="a">1</span>日至投标截止日前<span class="a">30</span>日本包产品有效业绩合计</div>
<div class="c" style="left:291px;top:346.1px;width:431px;line-height:17px;text-align:left;">金额进行计算：销售业绩最高得<span class="a">5</span>分，其他投标人采用采用线性插值法</div>
<div class="c" style="left:291px;top:362.7px;width:431px;line-height:17px;text-align:left;">计算，结果保留两位小数。业绩最多者得满分，其它投标人得分<span class="a">=</span>（投</div>
<div class="c" style="left:291px;top:379.3px;width:431px;line-height:17px;text-align:left;">标人有效业绩金额）<span class="a">/</span>（投标人有效业绩最多金额）<span class="a">*5</span>。</div>
<div class="c" style="left:722px;top:353.5px;width:60px;line-height:17px;text-align:center;"><span class="a">5</span></div>
<div class="c" style="left:789px;top:278.1px;width:458px;line-height:17px;text-align:justify;text-align-last:justify;"><span class="a">1</span>、业绩以投标人<span class="a">2023</span>年<span class="a">1</span>月<span class="a">1</span>日至投标截止日前<span class="a">30</span>天（含<span class="a">30</span>日）本包产品销</div>
<div class="c" style="left:792px;top:295.1px;width:450px;line-height:17px;text-align:justify;text-align-last:justify;">售金额计算，投标人须如实填写销售业绩统计表，填写格式及要求见附件</div>
<div class="c" style="left:785px;top:312.0px;width:463px;line-height:17px;text-align:justify;text-align-last:justify;">（销售业绩统计表仅汇总本包别标的物的销售业绩，需剔除非本包别招标物</div>
<div class="c" style="left:785px;top:329.0px;width:463px;line-height:17px;text-align:justify;text-align-last:justify;">资金额。销售业绩统计表包含非本包别标的物业绩的，视为无效业绩表，则</div>
<div class="c" style="left:785px;top:346.0px;width:463px;line-height:17px;text-align:justify;text-align-last:justify;">该项不得分），以所签订合同和对应发票扫描件为依据，业绩金额以发票金</div>
<div class="c" style="left:785px;top:363.0px;width:463px;line-height:17px;text-align:justify;text-align-last:justify;">额为准，合同签订日期和发票开具日期均必须在上述要求时间范围内为有效</div>
<div class="c" style="left:788px;top:379.9px;width:459px;line-height:17px;text-align:justify;text-align-last:justify;">业绩（原件备查）；<span class="a">2</span>、无效证明文件：无法辨认买卖双方公章，或买方不</div>
<div class="c" style="left:785px;top:396.9px;width:463px;line-height:17px;text-align:justify;text-align-last:justify;">属于销售统计范围，或无法确认数量，或无法辨认签约日期，或评标委员会</div>
<div class="c" style="left:785px;top:413.9px;width:463px;line-height:17px;text-align:justify;text-align-last:justify;">需要核查而无法从投标文件中获得买方有效联系方式，或按照投标文件提供</div>
<div class="c" style="left:782px;top:430.8px;width:468px;line-height:17px;text-align:center;">的买方联系方式核查未能得到有效证实。</div>
<div class="c" style="left:122px;top:481.5px;width:83px;line-height:17px;text-align:center;">检验报告</div>
<div class="c" style="left:205px;top:481.5px;width:83px;line-height:17px;text-align:center;">检验报告</div>
<div class="c" style="left:296px;top:465.0px;width:417px;line-height:17px;text-align:justify;text-align-last:justify;">提供具有法定资质的第三方机构出具的投标产品合格检验报告，</div>
<div class="c" style="left:297px;top:482.0px;width:415px;line-height:17px;text-align:justify;text-align-last:justify;">本包别<span class="a">2</span>个物料组（新<span class="L" style="width:21px"><span>MDG</span></span>物料组），每提供一个物料组（新<span class="L" style="width:21px"><span>MDG</span></span></div>
<div class="c" style="left:362px;top:498.8px;width:284px;line-height:17px;text-align:justify;text-align-last:justify;">物料组）的合格检验报告得<span class="a">1</span>分，满分<span class="a">2</span>分。</div>
<style>.sp{letter-spacing:0.8px}</style>
<div class="c" style="left:722px;top:482.3px;width:60px;line-height:17px;text-align:center;"><span class="a">2</span></div>
<div class="c" style="left:785px;top:474.5px;width:465px;line-height:17px;text-align:left;">提供<span class="a">2024</span>年以来具有法定资质的第三方机构出具的投标产品合格检验报告；</div>
<div class="c" style="left:785px;top:491.0px;width:465px;line-height:17px;text-align:left;">产品检验报告的委托人或送检单位必须为投标人（原件备查）</div>
<div class="c" style="left:122px;top:591.5px;width:83px;line-height:17px;text-align:center;">产品质量及</div>
<div class="c" style="left:122px;top:608.5px;width:83px;line-height:17px;text-align:center;">售后服务承</div>
<div class="c" style="left:122px;top:625.5px;width:83px;line-height:17px;text-align:center;">诺</div>
<div class="c" style="left:205px;top:539.7px;width:83px;line-height:17px;text-align:center;">售后服务响</div>
<div class="c" style="left:205px;top:556.9px;width:83px;line-height:17px;text-align:center;">应时间</div>
<div class="c" style="left:291px;top:531.8px;width:428px;line-height:17px;text-align:justify;text-align-last:justify;">在接到需方反映的质量问题信息后，承诺在<span class="a">1</span>小时内作出答复处理问题</div>
<div class="c" style="left:295px;top:548.0px;width:421px;line-height:17px;text-align:justify;text-align-last:justify;">得<span class="a">1</span>分，在<span class="a">4</span>小时内派服务工程师到现场（省外在<span class="a">24</span>小时内派服务工程</div>
<div class="c" style="left:288px;top:564.2px;width:434px;line-height:17px;text-align:center;">师到现场。）得<span class="a">1</span>分，否则不得分。</div>
<div class="c" style="left:722px;top:547.2px;width:60px;line-height:17px;text-align:center;"><span class="a">2</span></div>
<div class="c" style="left:782px;top:548.0px;width:468px;line-height:17px;text-align:center;">投标文件</div>
<div class="c" style="left:205px;top:600.0px;width:83px;line-height:17px;text-align:center;">售后服务相</div>
<div class="c" style="left:205px;top:616.8px;width:83px;line-height:17px;text-align:center;">关制度建立</div>
<div class="c" style="left:294px;top:600.1px;width:422px;line-height:17px;text-align:justify;text-align-last:justify;">有售后服务机构，得<span class="a">1</span>分；有完善的售后服务体系，得<span class="a">1</span>分；否则不得</div>
<div class="c" style="left:288px;top:616.9px;width:434px;line-height:17px;text-align:center;">分。</div>
<div class="c" style="left:722px;top:607.5px;width:60px;line-height:17px;text-align:center;"><span class="a">2</span></div>
<div class="c" style="left:785px;top:599.3px;width:463px;line-height:17px;text-align:justify;text-align-last:justify;">投标文件（提供售后服务机构地址及买卖或租赁合同发票；售后服务组织机</div>
<div class="c" style="left:782px;top:616.9px;width:468px;line-height:17px;text-align:center;">构图、人员构成基本情况及相关制度文本）</div>
<div class="c" style="left:205px;top:659.8px;width:83px;line-height:17px;text-align:center;">质量保证期</div>
<div class="c" style="left:205px;top:676.5px;width:83px;line-height:17px;text-align:center;">限</div>
<div class="c" style="left:291px;top:660.1px;width:428px;line-height:17px;text-align:justify;text-align-last:justify;">提供承诺质保期自到货验收合格之日起<span class="a">24</span>个月的基础上，每增加<span class="a">1</span>年质</div>
<div class="c" style="left:288px;top:676.4px;width:434px;line-height:17px;text-align:center;">保期加<span class="a">1</span>分，满分<span class="a">3</span>分。</div>
<div class="c" style="left:722px;top:667.5px;width:60px;line-height:17px;text-align:center;"><span class="a">3</span></div>
<div class="c" style="left:782px;top:667.7px;width:468px;line-height:17px;text-align:center;">投标文件</div>
<div class="c" style="left:39px;top:715.3px;width:166px;line-height:17px;text-align:center;">诚信自律</div>
<div class="c" style="left:205px;top:715.3px;width:83px;line-height:17px;text-align:center;">失信扣分</div>
<div class="c" style="left:291px;top:715.5px;width:431px;line-height:17px;text-align:left;">失信扣分<span class="a">=</span>商务分值（不含报价分值）<span class="a">*10%*</span>失信积分<span class="a">/10</span></div>
<div class="c" style="left:722px;top:715.5px;width:60px;line-height:17px;text-align:center;"><span class="a">0</span></div>
<div class="c" style="left:782px;top:715.5px;width:468px;line-height:17px;text-align:center;">投标人失信分以中国石油招标投标网发布的失信行为信息为准。</div>
<div class="c" style="left:39px;top:748.8px;width:83px;line-height:17px;text-align:center;">投标报价</div>
<div style="left:123px;top:741px;width:82px;height:31px;overflow:hidden">
<div class="c" style="left:0px;top:0.5px;width:82px;line-height:17px;text-align:center;">一、报价情</div>
<div class="c" style="left:0px;top:16.5px;width:82px;line-height:17px;text-align:center;">况</div>
</div>
<div class="c" style="left:205px;top:748.8px;width:83px;line-height:17px;text-align:center;">报价得分</div>
<div class="c" style="left:288px;top:748.8px;width:434px;line-height:17px;text-align:center;">按招标方案规定计算报价得分。</div>
<div class="c" style="left:722px;top:748.5px;width:60px;line-height:17px;text-align:center;"><span class="a">75</span></div>
<div class="c" style="left:782px;top:748.8px;width:468px;line-height:17px;text-align:center;">书面报价及电子版</div>
<div style="left:1907px;top:266px;width:17px;height:722px;background:#f0f0f0"></div>
<div style="left:1908px;top:251px;width:15px;height:15px;background:#fff;border:1px solid #adadad;box-sizing:border-box"></div>
<svg style="position:absolute;left:1911px;top:255px;" width="9" height="6" viewBox="0 0 9 6"><path d="M0.5 5.5h8L4.5 1z" fill="#222"/></svg>
<div style="left:1908px;top:512px;width:15px;height:463px;background:#fff;border:1px solid #adadad;box-sizing:border-box"></div>
<div style="left:1908px;top:975px;width:15px;height:13px;background:#fff;border:1px solid #adadad;box-sizing:border-box"></div>
<svg style="position:absolute;left:1911px;top:979px;" width="9" height="6" viewBox="0 0 9 6"><path d="M0.5 0.5h8L4.5 5z" fill="#222"/></svg>
<div style="left:0px;top:988px;width:1924px;height:28px;background:#e6e6e6"></div>
<div style="left:6px;top:988px;width:1898px;height:1px;background:#ababab"></div>
<svg style="position:absolute;left:31px;top:996px;" width="8" height="10" viewBox="0 0 8 10"><path d="M6 1v8L1.5 5z" fill="#bdbdbd"/></svg>
<svg style="position:absolute;left:59px;top:996px;" width="8" height="10" viewBox="0 0 8 10"><path d="M2 1v8l4.5-4z" fill="#bdbdbd"/></svg>
<div style="left:106px;top:988px;width:69px;height:24px;background:#fff;border-left:1px solid #ababab;border-right:1px solid #ababab;box-sizing:border-box"></div>
<div style="left:106px;top:1010px;width:69px;height:2px;background:#217346"></div>
<div style="left:-60.0px;top:992.5px;width:400px;text-align:center;line-height:17px;font-size:14px;color:#217346;white-space:nowrap;font-family:'Liberation Sans',sans-serif;">Sheet1</div>
<svg style="position:absolute;left:207px;top:993px;" width="17" height="17" viewBox="0 0 17 17"><circle cx="8.5" cy="8.5" r="7.5" fill="none" stroke="#777" stroke-width="1.1"/><path d="M8.5 4.5v8M4.5 8.5h8" stroke="#555" stroke-width="1.6"/></svg>
<div style="left:1157px;top:997px;width:2px;height:2px;background:#b0b0b0"></div>
<div style="left:1157px;top:1001px;width:2px;height:2px;background:#b0b0b0"></div>
<div style="left:1157px;top:1005px;width:2px;height:2px;background:#b0b0b0"></div>
<div style="left:1175px;top:995px;width:1px;height:15px;background:#c0c0c0"></div>
<div style="left:1175px;top:995px;width:729px;height:15px;background:#f0f0f0"></div>
<div style="left:1175px;top:995px;width:15px;height:15px;background:#fff;border:1px solid #adadad;box-sizing:border-box"></div>
<svg style="position:absolute;left:1179px;top:998px;" width="6" height="9" viewBox="0 0 6 9"><path d="M5 0.5v8L0.5 4.5z" fill="#222"/></svg>
<div style="left:1189px;top:995px;width:647px;height:15px;background:#fff;border:1px solid #adadad;box-sizing:border-box"></div>
<div style="left:1890px;top:995px;width:15px;height:15px;background:#fff;border:1px solid #adadad;box-sizing:border-box"></div>
<svg style="position:absolute;left:1895px;top:998px;" width="6" height="9" viewBox="0 0 6 9"><path d="M1 0.5v8l4.5-4z" fill="#222"/></svg>
<div style="left:0px;top:1016px;width:1924px;height:22px;background:#f3f3f3"></div>
<div style="left:0px;top:1016px;width:1924px;height:1px;background:#d6d6d6"></div>
<div style="left:18px;top:1019.5px;line-height:17px;font-size:13px;color:#444;white-space:nowrap;">就绪</div>
<svg style="position:absolute;left:59px;top:1019px;" width="17" height="16" viewBox="0 0 17 16"><path d="M7 2a6 6 0 1 0 6 6" fill="none" stroke="#555" stroke-width="1.2" stroke-dasharray="2 1.2"/><path d="M7 1v7l3 -1" fill="none" stroke="#444" stroke-width="1.3"/><path d="M9 9l6 6M15 9l-6 6" stroke="#444" stroke-width="1.6"/></svg>
<div style="left:79px;top:1018.5px;line-height:17px;font-size:12px;color:#333;white-space:nowrap;font-weight:bold;">辅助功能: 调查</div>
<div style="left:1621px;top:1017px;width:40px;height:21px;background:#c6c6c6"></div>
<svg style="position:absolute;left:1633px;top:1020px;" width="15" height="15" viewBox="0 0 15 15"><path d="M1.5 1.5h12v12h-12zM1.5 5.5h12M1.5 9.5h12M5.5 1.5v12M9.5 1.5v12" fill="none" stroke="#777" stroke-width="1.4"/></svg>
<svg style="position:absolute;left:1673px;top:1020px;" width="15" height="15" viewBox="0 0 15 15"><rect x="1" y="1" width="13" height="13" fill="none" stroke="#777" stroke-width="1.1"/><rect x="4" y="3.5" width="7" height="8" fill="none" stroke="#777" stroke-width="1"/><path d="M5.5 6h4M5.5 8h4" stroke="#777"/></svg>
<svg style="position:absolute;left:1713px;top:1020px;" width="15" height="15" viewBox="0 0 15 15"><path d="M1 1h13v13H1zM1 8h13M5 1v7M9 1v7" fill="none" stroke="#777" stroke-width="1.1"/></svg>
<div style="left:1747px;top:1026px;width:8px;height:1px;background:#444"></div>
<div style="left:1760px;top:1027px;width:100px;height:1px;background:#555"></div>
<div style="left:1810px;top:1022px;width:5px;height:10px;background:#444"></div>
<div style="left:1865px;top:1026px;width:9px;height:1px;background:#444"></div>
<div style="left:1869px;top:1022px;width:1px;height:9px;background:#444"></div>
<div style="left:1886px;top:1019.0px;line-height:17px;font-size:13px;color:#333;white-space:nowrap;font-family:'Liberation Sans',sans-serif;">115%</div>
<div style="left:0px;top:1038px;width:1924px;height:6px;background:#1f2b33"></div>
</body></html>
